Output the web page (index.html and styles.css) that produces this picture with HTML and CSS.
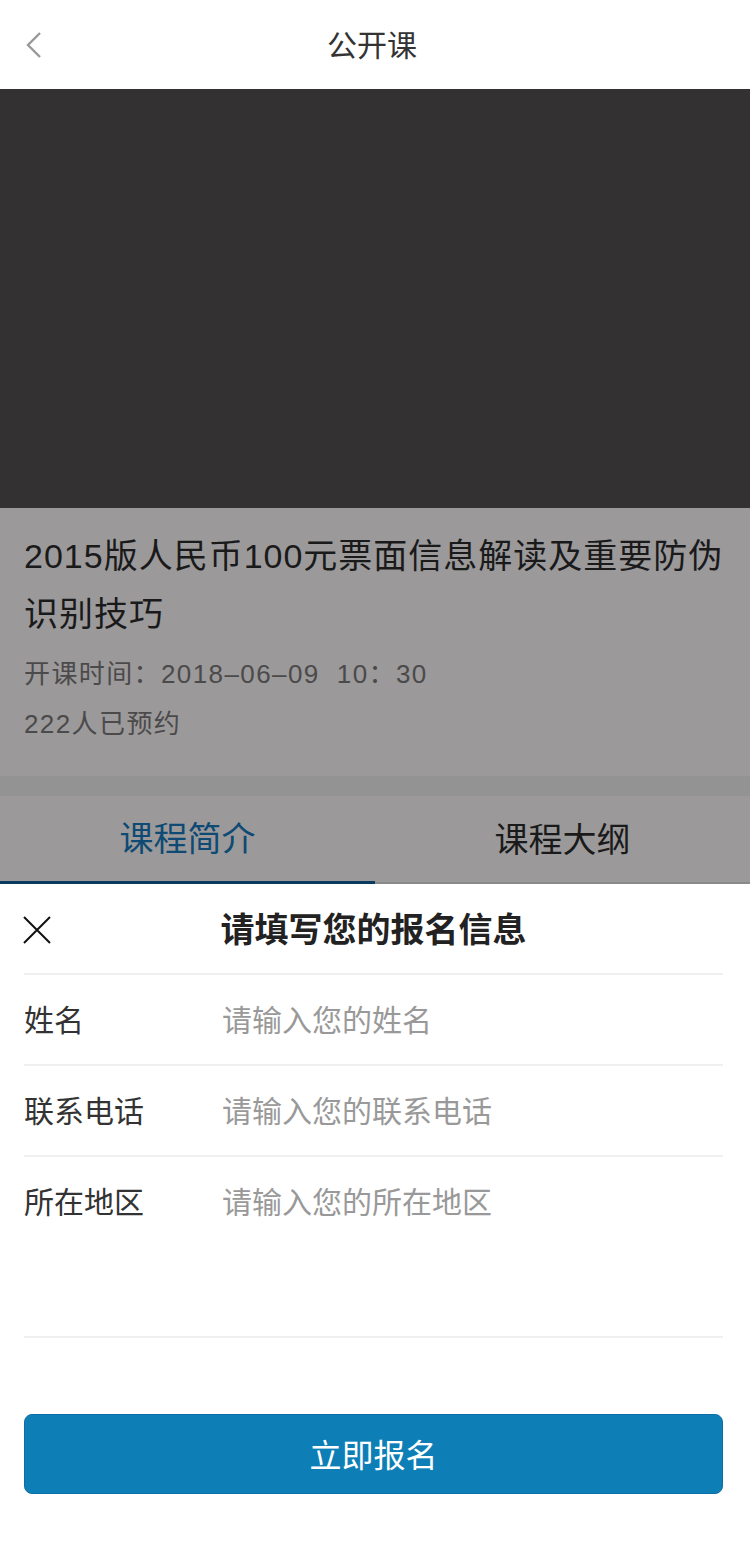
FILE: index.html
```html
<!DOCTYPE html>
<html lang="zh-CN">
<head>
    <meta charset="UTF-8">
    <meta name="viewport" content="width=device-width, initial-scale=1.0">
    <title>公开课</title>
    <link rel="stylesheet" href="styles.css">
</head>
<body>
    <!-- Top bar -->
    <header class="topbar">
        <a class="back-btn" href="#">
            <svg width="20" height="28" viewBox="0 0 20 28">
                <path d="M16 2 L4 14 L16 26" fill="none" stroke="#999" stroke-width="2.4"/>
            </svg>
        </a>
        <h1 class="topbar-title">公开课</h1>
    </header>

    <!-- Video placeholder -->
    <div class="video"></div>

    <!-- Course info (dimmed behind the sheet) -->
    <section class="course-info">
        <h2 class="course-title">2015版人民币100元票面信息解读及重要防伪识别技巧</h2>
        <p class="course-meta">开课时间：2018–06–09&nbsp;&nbsp;10：30</p>
        <p class="course-meta">222人已预约</p>
    </section>

    <div class="band"></div>

    <nav class="tabs">
        <span class="tab active">课程简介</span>
        <span class="tab">课程大纲</span>
    </nav>

    <!-- Sign-up sheet -->
    <section class="sheet">
        <div class="sheet-head">
            <button class="close-btn">
                <svg width="28" height="28" viewBox="0 0 28 28">
                    <path d="M1 1 L27 27 M27 1 L1 27" stroke="#111" stroke-width="2"/>
                </svg>
            </button>
            <h3 class="sheet-title">请填写您的报名信息</h3>
        </div>

        <div class="form-row">
            <label>姓名</label>
            <span class="placeholder">请输入您的姓名</span>
        </div>
        <div class="form-row">
            <label>联系电话</label>
            <span class="placeholder">请输入您的联系电话</span>
        </div>
        <div class="form-row tall">
            <label>所在地区</label>
            <span class="placeholder">请输入您的所在地区</span>
        </div>

        <button class="submit-btn">立即报名</button>
    </section>
</body>
</html>
```

FILE: styles.css
```css
* {
    box-sizing: border-box;
}

body {
    margin: 0;
    padding: 0;
    font-family: "Liberation Sans", "Noto Sans CJK SC", sans-serif;
    background-color: #fff;
}

h1, h2, h3, p {
    margin: 0;
}

/* Top bar */
.topbar {
    height: 89px;
    display: flex;
    align-items: center;
    justify-content: center;
    position: relative;
    background-color: #fff;
}

.back-btn {
    position: absolute;
    left: 24px;
    top: 31px;
    display: block;
    line-height: 0;
}

.topbar-title {
    font-size: 30px;
    font-weight: normal;
    color: #333;
    margin-top: -4px;
    margin-left: -6px;
}

/* Video */
.video {
    height: 419px;
    background-color: #333132;
}

/* Course info */
.course-info {
    background-color: #9b999a;
    padding: 19px 24px 27px;
}

.course-title {
    font-size: 34px;
    font-weight: normal;
    line-height: 58px;
    letter-spacing: 1px;
    color: #1a1a1a;
    margin-bottom: 6px;
}

.course-meta {
    font-size: 26px;
    line-height: 50px;
    letter-spacing: 1.4px;
    color: #4b4a4b;
}

.band {
    height: 20px;
    background-color: #939394;
}

/* Tabs */
.tabs {
    display: flex;
    height: 88px;
    background-color: #9b999a;
}

.tab {
    flex: 1;
    display: flex;
    align-items: center;
    justify-content: center;
    font-size: 34px;
    color: #1a1a1a;
    border-bottom: 2px solid #8a8a8a;
    padding-bottom: 4px;
}

.tab.active {
    color: #0e4a73;
    border-bottom: 3px solid #0a3a5e;
}

/* Sheet */
.sheet {
    background-color: #fff;
    padding: 0 27px 49px 24px;
}

.sheet-head {
    height: 91px;
    display: flex;
    align-items: center;
    justify-content: center;
    position: relative;
    border-bottom: 2px solid #efefef;
}

.close-btn {
    position: absolute;
    left: -1px;
    top: 32px;
    background: none;
    border: none;
    padding: 0;
    line-height: 0;
}

.sheet-title {
    font-size: 34px;
    font-weight: bold;
    color: #222;
    margin-top: -2px;
}

.form-row {
    display: flex;
    align-items: center;
    height: 91px;
    border-bottom: 2px solid #efefef;
    font-size: 30px;
    padding-bottom: 3px;
}

.form-row.tall {
    height: 181px;
    align-items: flex-start;
    padding-top: 21px;
}

.form-row label {
    width: 198px;
    color: #333;
}

.placeholder {
    color: #999;
}

/* Submit */
.submit-btn {
    display: block;
    width: 100%;
    height: 80px;
    margin-top: 76px;
    background-color: #0e7fb6;
    border: 1px solid #0b6ea6;
    border-radius: 8px;
    color: #fff;
    font-family: inherit;
    font-size: 32px;
    padding-bottom: 4px;
}
```
